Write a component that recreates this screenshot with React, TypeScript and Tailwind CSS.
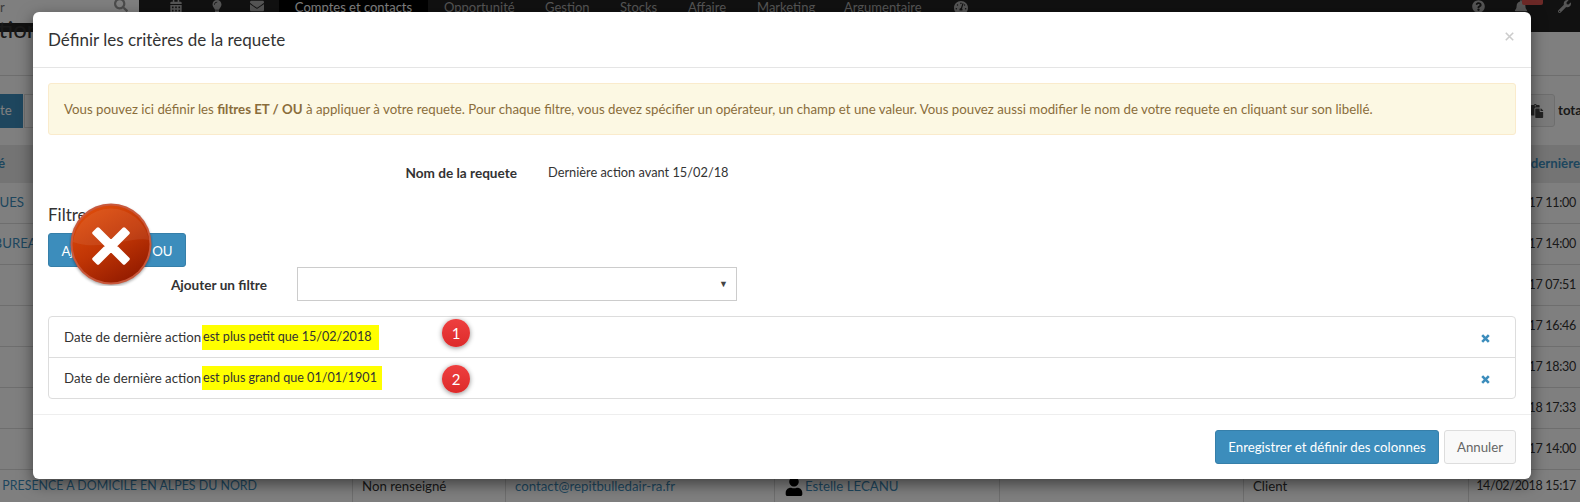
import React from "react";
import { FaCalendarAlt, FaLightbulb, FaEnvelope, FaSearch, FaQuestionCircle, FaBell, FaWrench, FaTachometerAlt, FaUser, FaPaste } from "react-icons/fa";

const rows = [
  { first: "TECHNIQUES", firstClass: "pr-[328px]", date: "20/11/2017 11:00" },
  { first: "BUREAU SERVICES", firstClass: "pr-[243px]", date: "22/11/2017 14:00" },
  { first: "", firstClass: "", date: "24/11/2017 07:51" },
  { first: "", firstClass: "", date: "27/11/2017 16:46" },
  { first: "", firstClass: "", date: "28/11/2017 18:30" },
  { first: "", firstClass: "", date: "05/01/2018 17:33" },
  { first: "", firstClass: "", date: "29/11/2017 14:00" },
];

function RedX() {
  return (
    <svg width="84" height="84" viewBox="0 0 84 84" className="absolute left-[36px] top-[190px]">
      <defs>
        <linearGradient id="rx" x1="0.25" y1="0.05" x2="0.75" y2="0.95">
          <stop offset="0" stopColor="#dc4a0a" />
          <stop offset="0.5" stopColor="#c03505" />
          <stop offset="1" stopColor="#951c00" />
        </linearGradient>
        <filter id="rs" x="-20%" y="-20%" width="140%" height="140%">
          <feGaussianBlur stdDeviation="1.8" />
        </filter>
      </defs>
      <circle cx="42" cy="43.5" r="40.5" fill="#000" opacity="0.35" filter="url(#rs)" />
      <circle cx="42" cy="42" r="40.5" fill="#c8583c" />
      <circle cx="42" cy="42" r="38.5" fill="url(#rx)" />
      <path d="M4 40 A38.5 38.5 0 0 1 80 38 C62 34 30 50 4 40 Z" fill="#fff" opacity="0.07" />
      <path d="M29 27 L42 40 L55 27 L59 31 L46 44 L59 57 L55 61 L42 48 L29 61 L25 57 L38 44 L25 31 Z" fill="#fff" stroke="#fff" strokeWidth="3.5" strokeLinejoin="round" />
    </svg>
  );
}

function Badge({ n, className }: { n: string; className: string }) {
  return (
    <div className={"absolute left-[409px] flex h-[28px] w-[28px] items-center justify-center rounded-full bg-gradient-to-b from-[#ee3f3f] to-[#dd2a2a] text-[15px] text-white shadow-[0_1px_5px_rgba(0,0,0,0.45)] " + className}>
      {n}
    </div>
  );
}

function SmallX({ className }: { className: string }) {
  return (
    <svg width="9" height="9" viewBox="0 0 9 9" className={className}>
      <path d="M1.2 1.2 L7.8 7.8 M7.8 1.2 L1.2 7.8" stroke="currentColor" strokeWidth="2.6" />
    </svg>
  );
}

export default function App() {
  return (
    <div className="relative h-[502px] w-[1580px] overflow-hidden bg-white font-['Lato',sans-serif] text-[13.25px] text-[#333]">
      {/* page behind the dialog */}
      <div className="flex h-[32px] items-start bg-[#222] text-[13px] leading-[14px] whitespace-nowrap text-[#aaa]">
        <div className="flex h-[23px] w-[139px] justify-between bg-white pr-[11px] text-[#555]">
          <span className="text-[#777]">r</span>
          <FaSearch className="-mt-[2px] h-[14px] w-[14px] text-[#999]" />
        </div>
        <FaCalendarAlt className="ml-[31px] h-[13px] w-[12px] text-[#aaa]" />
        <FaLightbulb className="ml-[30px] h-[13px] w-[10px] text-[#aaa]" />
        <FaEnvelope className="ml-[28px] -mt-[1px] h-[14px] w-[14px] text-[#aaa]" />
        <div className="ml-[15px] flex h-[32px] w-[149px] justify-center bg-black text-white">Comptes et contacts</div>
        <span className="ml-[16px] w-[71px]">Opportunité</span>
        <span className="ml-[30px] w-[45px]">Gestion</span>
        <span className="ml-[30px] w-[38px]">Stocks</span>
        <span className="ml-[30px] w-[38px]">Affaire</span>
        <span className="ml-[31px] w-[58px]">Marketing</span>
        <span className="ml-[29px] w-[80px]">Argumentaire</span>
        <FaTachometerAlt className="ml-[30px] h-[13px] w-[14px] text-[#aaa]" />
        <FaQuestionCircle className="ml-[504px] h-[13px] w-[13px] text-[#aaa]" />
        <FaBell className="ml-[29px] h-[14px] w-[14px] text-[#aaa]" />
        <div className="-ml-[6px] h-[5px] w-[21px] rounded-b-[2px] bg-[#d9534f]" />
        <FaWrench className="ml-[15px] h-[13px] w-[13px] text-[#aaa]" />
      </div>
      <div className="h-[44px] flow-root border-b border-[#ddd]">
        <div className="-mt-[17px] -ml-[29px] text-[24px] leading-[28px] text-[#333]">Actions</div>
      </div>
      <div className="flex h-[69px] items-center justify-between">
        <div className="flex h-[34px] items-center">
          <div className="flex h-[34px] w-[23px] items-center bg-[#3c8dbc] text-white">te</div>
          <div className="ml-[1px] h-[34px] w-[12px] border border-[#ddd]" />
        </div>
        <div className="flex items-center">
          <div className="flex h-[33px] w-[40px] items-center justify-end rounded-[3px] border border-[#ddd] bg-[#f4f4f4] pr-[10px] text-[#444]">
            <FaPaste className="h-[14px] w-[14px]" />
          </div>
          <span className="ml-[3px] w-[22px] overflow-hidden font-bold">total</span>
        </div>
      </div>
      <div className="grid h-[38px] grid-cols-[352px_153px_269px_225px_244px_225px_112px] items-center bg-[#e8e8e8] font-bold text-[#3c8dbc]">
        <div className="flex justify-end pr-[347px] whitespace-nowrap">Activité</div>
        <div /><div /><div /><div /><div />
        <div className="flex justify-end whitespace-nowrap">Date dernière</div>
      </div>
      {rows.map((r) => (
        <div key={r.date} className="grid h-[41px] grid-cols-[352px_153px_269px_225px_244px_225px_112px] items-center border-b border-[#ddd]">
          <div className={"flex justify-end whitespace-nowrap text-[#3c8dbc] " + r.firstClass}>{r.first}</div>
          <div /><div /><div /><div /><div />
          <div className="flex justify-end pr-[4px] text-[12.5px] tracking-[-0.3px] whitespace-nowrap">{r.date}</div>
        </div>
      ))}
      <div className="grid h-[32px] grid-cols-[352px_153px_269px_225px_244px_225px_112px] items-start leading-[18px]">
        <div className="flex justify-end pt-[7px] pr-[95px] text-[12.4px] whitespace-nowrap text-[#3c8dbc]">EDUCATION PRESENCE A DOMICILE EN ALPES DU NORD</div>
        <div className="h-[32px] border-l border-[#ddd] pt-[7px] pl-[9px]">Non renseigné</div>
        <div className="h-[32px] border-l border-[#ddd] pt-[7px] pl-[9px] text-[#3c8dbc]">contact@repitbulledair-ra.fr</div>
        <div className="flex h-[32px] items-start border-l border-[#ddd] pt-[7px] pl-[10px] text-[#3c8dbc]">
          <FaUser className="mr-[2px] h-[19px] w-[18px] text-black" />
          Estelle LECANU
        </div>
        <div className="h-[32px] border-l border-[#ddd]" />
        <div className="h-[32px] border-l border-[#ddd] pt-[7px] pl-[9px]">Client</div>
        <div className="h-[32px] border-l border-[#ddd] pt-[7px] pr-[4px] text-right text-[12.5px] tracking-[-0.3px] whitespace-nowrap">14/02/2018 15:17</div>
      </div>

      {/* backdrop */}
      <div className="absolute inset-0 bg-black/50" />

      {/* dialog */}
      <div className="absolute top-[12px] left-[33px] h-[467px] w-[1498px] rounded-[6px] bg-white shadow-[0_5px_15px_rgba(0,0,0,0.5)]">
        <div className="flex h-[56px] items-center justify-between border-b border-[#e5e5e5] pr-[17px] pl-[15px]">
          <span className="text-[17px] text-[#333]">Définir les critères de la requete</span>
          <svg width="9" height="9" viewBox="0 0 9 9" className="-mt-[6px] text-[#ccc]">
            <path d="M0.8 0.8 L8.2 8.2 M8.2 0.8 L0.8 8.2" stroke="currentColor" strokeWidth="1.6" />
          </svg>
        </div>
        <div className="px-[15px] pt-[15px]">
          <div className="flex h-[52px] items-center rounded-[3px] border border-[#faebcc] bg-[#fcf8e3] pt-[2px] pl-[15px] text-[#8a6d3b]">
            <span>Vous pouvez ici définir les <b>filtres ET / OU</b> à appliquer à votre requete. Pour chaque filtre, vous devez spécifier un opérateur, un champ et une valeur. Vous pouvez aussi modifier le nom de votre requete en cliquant sur son libellé.</span>
          </div>
          <div className="mt-[27px] flex h-[20px] items-center pt-[2px]">
            <div className="w-[469px] text-right text-[13.6px] font-bold">Nom de la requete</div>
            <div className="ml-[31px] text-[12.8px]">Dernière action avant 15/02/18</div>
          </div>
          <div className="mt-[20px] h-[24px] pt-[1px] text-[17px] leading-[24px]">Filtres</div>
          <div className="mt-[7px] flex h-[34px] w-[138px] items-center justify-center rounded-[3px] border border-[#367fa9] bg-[#3c8dbc] pt-[3px] text-white">Ajouter groupe OU</div>
          <div className="flex h-[34px] items-center">
            <div className="w-[219px] pt-[2px] text-right text-[13.6px] font-bold">Ajouter un filtre</div>
            <div className="ml-[30px] flex h-[34px] w-[440px] items-center justify-end border border-[#ccc] pr-[8px] text-[9px] text-[#444]">▼</div>
          </div>
          <div className="mt-[15px] rounded-[4px] border border-[#ddd]">
            <div className="flex h-[40px] items-center justify-between pr-[25px] pl-[15px]">
              <div className="flex items-center whitespace-pre">
                <span className="w-[138px] pt-[2px]">Date de dernière action</span>
                <span className="flex h-[25px] w-[177px] items-center bg-[#ffff00] pt-[1px] pl-[1px] text-[12.6px]">est plus petit que 15/02/2018</span>
              </div>
              <SmallX className="mt-[2px] text-[#3c8dbc]" />
            </div>
            <div className="flex h-[41px] items-center justify-between border-t border-[#ddd] pr-[25px] pl-[15px]">
              <div className="flex items-center whitespace-pre">
                <span className="w-[138px] pt-[2px]">Date de dernière action</span>
                <span className="flex h-[24px] w-[180px] items-center bg-[#ffff00] pt-[1px] pl-[1px] text-[12.6px]">est plus grand que 01/01/1901</span>
              </div>
              <SmallX className="mt-[2px] text-[#3c8dbc]" />
            </div>
          </div>
        </div>
        <div className="mt-[15px] flex h-[65px] items-center justify-end gap-[5px] border-t border-[#eee] pr-[15px]">
          <div className="flex h-[34px] w-[224px] items-center justify-center rounded-[3px] border border-[#367fa9] bg-[#3c8dbc] pt-[2px] text-white">Enregistrer et définir des colonnes</div>
          <div className="flex h-[34px] w-[72px] items-center justify-center rounded-[3px] border border-[#ddd] bg-[#f9f9f9] pt-[2px] text-[#666]">Annuler</div>
        </div>
        <Badge n="1" className="top-[307px]" />
        <Badge n="2" className="top-[353px]" />
        <RedX />
      </div>
    </div>
  );
}
